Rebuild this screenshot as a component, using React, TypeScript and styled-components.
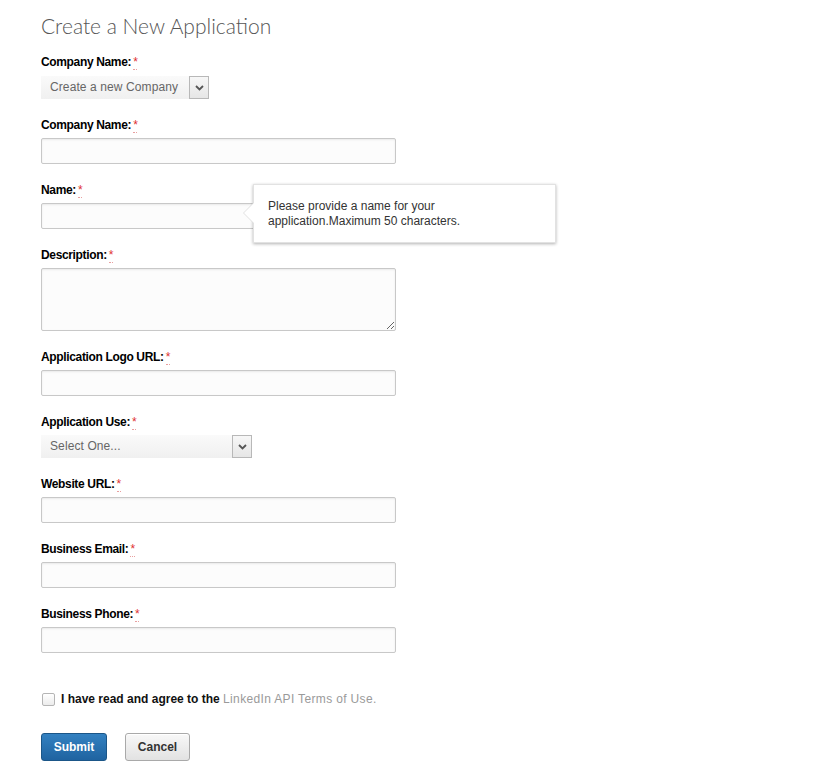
import React from "react";
import styled, { createGlobalStyle } from "styled-components";

const Global = createGlobalStyle`
  html, body { margin: 0; padding: 0; background: #fff; }
  body { font-family: "Liberation Sans", Arial, sans-serif; font-size: 12px; color: #000; }
  * { box-sizing: border-box; }
`;

const Page = styled.div`
  padding: 12px 0 0 41px;
  width: 821px;
`;

const Title = styled.h1`
  margin: 0 0 15px 0;
  font-family: Lato, "Open Sans", sans-serif;
  font-weight: 300;
  font-size: 21px;
  line-height: 28px;
  color: #555;
`;

const Form = styled.form`
  display: flex;
  flex-direction: column;
  width: 520px;
`;

const Field = styled.div`
  position: relative;
  display: flex;
  flex-direction: column;
  align-items: flex-start;
  margin-bottom: 19px;
`;

const Label = styled.label`
  display: block;
  height: 14px;
  line-height: 14px;
  font-weight: bold;
  font-size: 12px;
  letter-spacing: -0.35px;
  color: #000;
  margin-bottom: 6px;
`;

const Req = styled.abbr`
  color: #e03030;
  text-decoration: none;
  border-bottom: 1px dotted #e8a0a0;
  margin-left: 2px;
  font-weight: normal;
`;

const TextInput = styled.input`
  width: 355px;
  height: 26px;
  border: 1px solid #c8c8c8;
  border-radius: 2px;
  background: #fcfcfc;
  box-shadow: inset 0 1px 2px rgba(0, 0, 0, 0.08);
  font: inherit;
  padding: 0 6px;
`;

const TextArea = styled.textarea`
  width: 355px;
  height: 63px;
  border: 1px solid #c8c8c8;
  border-radius: 2px;
  background: #fcfcfc;
  box-shadow: inset 0 1px 2px rgba(0, 0, 0, 0.08);
  font: inherit;
  padding: 4px 6px;
  resize: vertical;
`;

const SelectBox = styled.div<{ $w: number; $top: number }>`
  display: flex;
  width: ${(p) => p.$w}px;
  height: 23px;
  margin-top: ${(p) => p.$top}px;
  background: linear-gradient(#fafafa, #f0f0f0);
`;

const SelectText = styled.span`
  flex: 1;
  padding-left: 9px;
  line-height: 23px;
  font-size: 12px;
  color: #666;
  letter-spacing: 0.1px;
`;

const SelectArrow = styled.span`
  width: 20px;
  height: 23px;
  border: 1px solid #b8b8b8;
  background: linear-gradient(#f7f7f7, #e6e6e6);
  display: flex;
  align-items: center;
  justify-content: center;
`;

const Tooltip = styled.div`
  position: absolute;
  left: 212px;
  top: 1px;
  width: 303px;
  height: 59px;
  background: #fff;
  border: 1px solid #e2e2e2;
  box-shadow: 0 1px 3px rgba(0, 0, 0, 0.3);
  padding: 14px 0 0 14px;
  font-size: 12px;
  line-height: 15px;
  color: #333;
  &::before {
    content: "";
    position: absolute;
    left: -11px;
    top: 17px;
    width: 0;
    height: 0;
    border-top: 11px solid transparent;
    border-bottom: 11px solid transparent;
    border-right: 11px solid #e0e0e0;
  }
  &::after {
    content: "";
    position: absolute;
    left: -10px;
    top: 18px;
    width: 0;
    height: 0;
    border-top: 10px solid transparent;
    border-bottom: 10px solid transparent;
    border-right: 10px solid #fff;
  }
`;

const TipText = styled.div`
  width: 210px;
`;

const AgreeRow = styled.div`
  display: flex;
  align-items: center;
  margin-top: 19px;
  height: 16px;
`;

const Check = styled.span`
  width: 13px;
  height: 13px;
  border: 1px solid #b5b5b5;
  border-radius: 2px;
  background: linear-gradient(#fff, #ececec);
  margin: 0 6px 0 1px;
`;

const AgreeText = styled.span`
  font-weight: bold;
  font-size: 12px;
  letter-spacing: 0;
  color: #111;
`;

const TermsLink = styled.a`
  font-weight: normal;
  color: #9a9a9a;
  text-decoration: none;
  letter-spacing: 0.35px;
`;

const Buttons = styled.div`
  display: flex;
  gap: 18px;
  margin-top: 26px;
`;

const Button = styled.button<{ $primary?: boolean }>`
  width: ${(p) => (p.$primary ? 66 : 65)}px;
  height: 28px;
  border-radius: 3px;
  font-family: "Liberation Sans", Arial, sans-serif;
  font-weight: bold;
  font-size: 12px;
  cursor: pointer;
  border: 1px solid ${(p) => (p.$primary ? "#1b5688" : "#a9a9a9")};
  color: ${(p) => (p.$primary ? "#fff" : "#333")};
  background: ${(p) =>
    p.$primary
      ? "linear-gradient(#3381c1, #1f63a0)"
      : "linear-gradient(#f8f8f8, #e2e2e2)"};
  box-shadow: ${(p) => (p.$primary ? "none" : "inset 0 1px 0 #fff")};
`;

const Chevron = () => (
  <svg width="9" height="6" viewBox="0 0 9 6">
    <path d="M1 1 L4.5 4.5 L8 1" fill="none" stroke="#555" strokeWidth="1.8" />
  </svg>
);

const Sel = ({ w, text, top }: { w: number; text: string; top: number }) => (
  <SelectBox $w={w} $top={top}>
    <SelectText>{text}</SelectText>
    <SelectArrow>
      <Chevron />
    </SelectArrow>
  </SelectBox>
);

const L = ({ children }: { children: React.ReactNode }) => (
  <Label>
    {children}
    <Req title="required">*</Req>
  </Label>
);

export default function App() {
  return (
    <>
      <Global />
      <Page>
        <Title>Create a New Application</Title>
        <Form onSubmit={(e) => e.preventDefault()}>
          <Field>
            <L>Company Name:</L>
            <Sel w={168} top={1} text="Create a new Company" />
          </Field>
          <Field>
            <L>Company Name:</L>
            <TextInput />
          </Field>
          <Field>
            <L>Name:</L>
            <TextInput />
            <Tooltip>
              <TipText>Please provide a name for your application.Maximum 50 characters.</TipText>
            </Tooltip>
          </Field>
          <Field>
            <L>Description:</L>
            <TextArea />
          </Field>
          <Field>
            <L>Application Logo URL:</L>
            <TextInput />
          </Field>
          <Field>
            <L>Application Use:</L>
            <Sel w={211} top={0} text="Select One..." />
          </Field>
          <Field>
            <L>Website URL:</L>
            <TextInput />
          </Field>
          <Field>
            <L>Business Email:</L>
            <TextInput />
          </Field>
          <Field>
            <L>Business Phone:</L>
            <TextInput />
          </Field>
          <AgreeRow>
            <Check />
            <AgreeText>
              I have read and agree to the <TermsLink href="#">LinkedIn API Terms of Use.</TermsLink>
            </AgreeText>
          </AgreeRow>
          <Buttons>
            <Button $primary type="submit">Submit</Button>
            <Button type="button">Cancel</Button>
          </Buttons>
        </Form>
      </Page>
    </>
  );
}
